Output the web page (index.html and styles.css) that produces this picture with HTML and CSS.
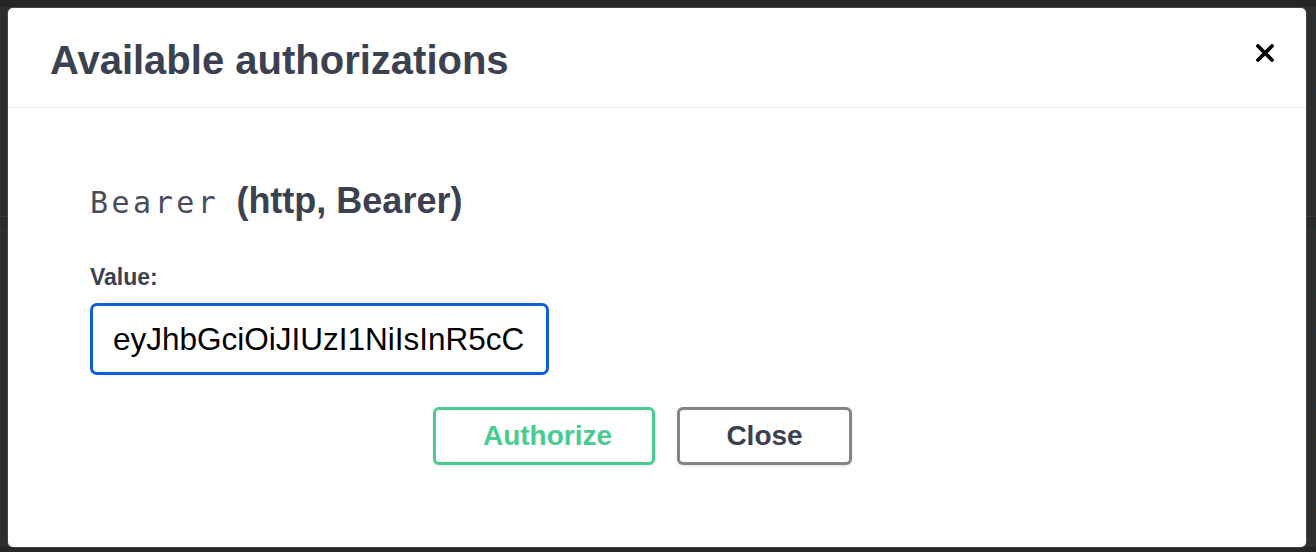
FILE: index.html
```html
<!DOCTYPE html>
<html lang="en">
<head>
<meta charset="utf-8">
<title>Available authorizations</title>
<link rel="stylesheet" href="styles.css">
</head>
<body>
<div class="backdrop">
  <div class="modal">
    <div class="modal-header">
      <h3 class="modal-title">Available authorizations</h3>
      <button class="close-x" aria-label="Close">
        <svg width="18" height="18" viewBox="0 0 18 18"><path d="M2 2 L16 16 M16 2 L2 16" stroke="#000" stroke-width="3.8" stroke-linecap="round" fill="none"/></svg>
      </button>
    </div>
    <div class="modal-body">
      <h4 class="scheme-title"><code class="scheme-name">Bearer</code> <span class="scheme-type">(http, Bearer)</span></h4>
      <label class="field-label">Value:</label>
      <div class="input-box">eyJhbGciOiJIUzI1NiIsInR5cC</div>
      <div class="btn-wrapper">
        <button class="btn btn-authorize">Authorize</button>
        <button class="btn btn-close">Close</button>
      </div>
    </div>
  </div>
</div>
</body>
</html>
```
FILE: styles.css
```css
html, body {
  margin: 0;
  padding: 0;
}
body {
  width: 1316px;
  height: 552px;
  overflow: hidden;
  font-family: "Liberation Sans", Arial, sans-serif;
  background: linear-gradient(to bottom,
    #262626 0px, #262626 7px,
    #2e2e2e 7px, #2e2e2e 18px,
    #1f3246 18px, #1f3246 19px,
    #2e2e2e 19px, #2e2e2e 91px,
    #1f3246 91px, #1f3246 92px,
    #2e2e2e 92px, #2e2e2e 216px,
    #3a3a3a 216px, #3a3a3a 217px,
    #2a2a2a 217px, #2a2a2a 228px,
    #1b3a2c 228px, #1b3a2c 229px,
    #2e2e2e 229px, #2e2e2e 292px,
    #1b3a2c 292px, #1b3a2c 293px,
    #2e2e2e 293px, #2e2e2e 332px,
    #1f3246 332px, #1f3246 333px,
    #2e2e2e 333px, #2e2e2e 406px,
    #1f3246 406px, #1f3246 407px,
    #2e2e2e 407px, #2e2e2e 436px,
    #3b2a18 436px, #3b2a18 437px,
    #2e2e2e 437px, #2e2e2e 510px,
    #3b2a18 510px, #3b2a18 511px,
    #2e2e2e 511px, #2e2e2e 547px,
    #262626 547px, #262626 552px);
}
.backdrop {
  padding: 8px 10px 5px 8px;
}
.modal {
  width: 1298px;
  height: 539px;
  box-sizing: border-box;
  background: #fff;
  border-radius: 5px;
  box-shadow: 0 0 0 1px rgba(255, 255, 255, 0.12);
  overflow: hidden;
  color: #3b4151;
}
.modal-header {
  height: 100px;
  box-sizing: border-box;
  padding: 4px 32px 0 42px;
  border-bottom: 1px solid #ebebeb;
  display: flex;
  align-items: center;
  justify-content: space-between;
}
.modal-title {
  margin: 0;
  font-size: 40px;
  font-weight: 700;
  line-height: 46px;
  color: #3b4151;
}
.close-x {
  align-self: flex-start;
  margin-top: 32px;
  padding: 0;
  border: 0;
  background: none;
  width: 18px;
  height: 18px;
  display: flex;
}
.modal-body {
  padding: 0 111px 0 82px;
  display: flex;
  flex-direction: column;
}
.scheme-title {
  margin: 73px 0 0;
  font-size: 36px;
  line-height: 40px;
  font-weight: 700;
  color: #3b4151;
  white-space: nowrap;
}
.scheme-name {
  font-family: "DejaVu Sans Mono", monospace;
  font-weight: 400;
  font-size: 30px;
  letter-spacing: 3.5px;
  color: #474d5c;
}
.scheme-type {
  margin-left: 7px;
}
.field-label {
  margin-top: 41px;
  font-size: 23px;
  line-height: 26px;
  font-weight: 700;
  color: #3b4151;
}
.input-box {
  margin-top: 13px;
  width: 459px;
  height: 72px;
  box-sizing: border-box;
  border: 3px solid #0b62d2;
  border-radius: 7px;
  padding: 0 0 0 20px;
  display: flex;
  align-items: center;
  font-size: 31.5px;
  color: #000;
  white-space: nowrap;
  overflow: hidden;
}
.btn-wrapper {
  margin-top: 32px;
  display: flex;
  justify-content: center;
  gap: 22px;
}
.btn {
  height: 58px;
  box-sizing: border-box;
  background: #fff;
  border-radius: 6px;
  font-family: "Liberation Sans", Arial, sans-serif;
  font-size: 28px;
  font-weight: 700;
  box-shadow: 0 1px 3px rgba(0, 0, 0, 0.12);
  cursor: pointer;
}
.btn-authorize {
  width: 222px;
  padding: 0 0 0 7px;
  border: 3px solid #49cc90;
  color: #49cc90;
}
.btn-close {
  width: 175px;
  padding: 0;
  border: 3px solid #848484;
  color: #3b4151;
}
```
